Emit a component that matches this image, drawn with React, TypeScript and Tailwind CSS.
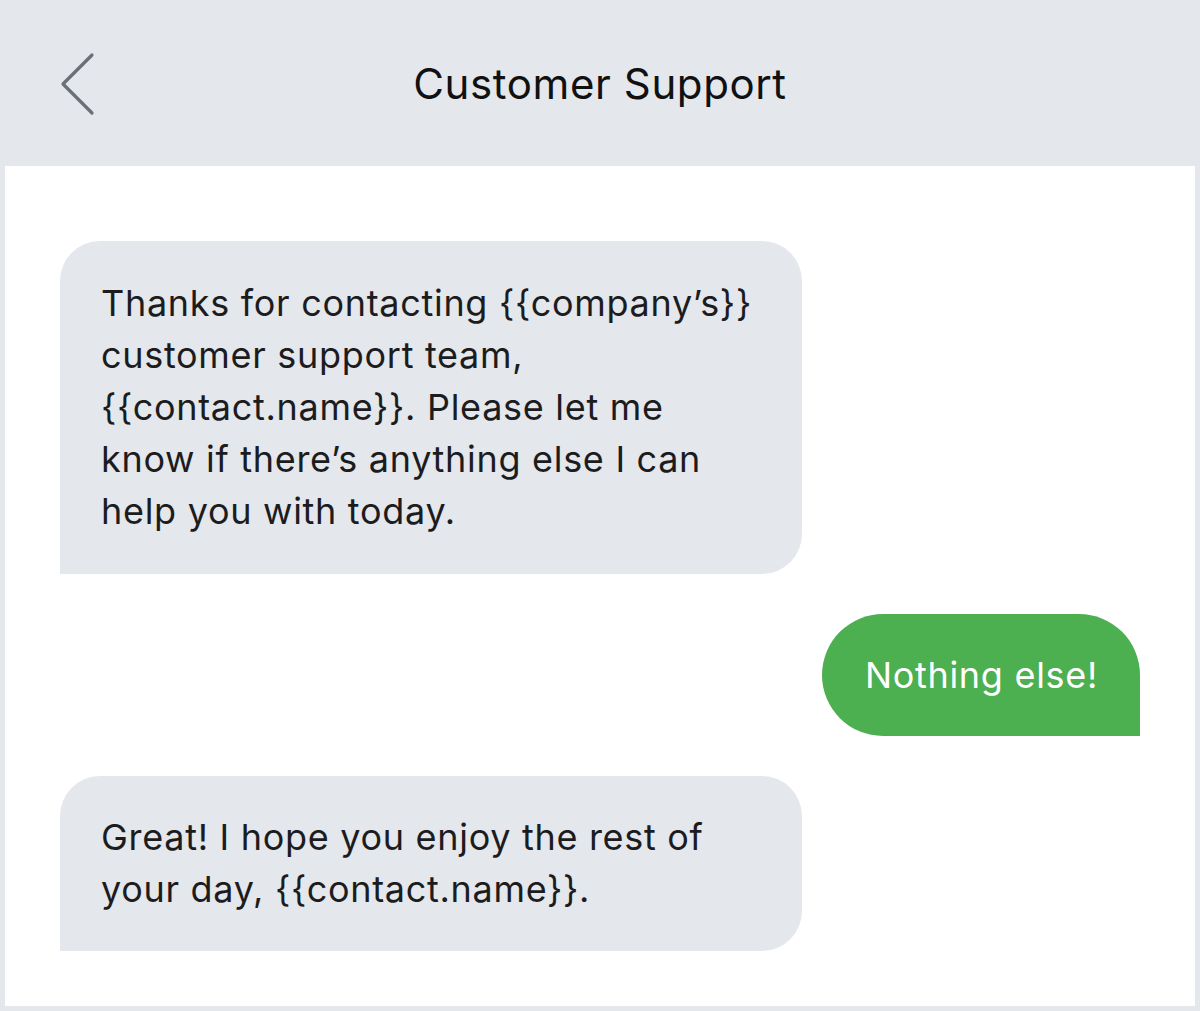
export default function App() {
  return (
    <div
      className="w-full h-[1011px] bg-[#e4e7eb] pt-px px-[5px] pb-[5px] flex flex-col"
      style={{ fontFamily: 'Inter, "Noto Sans", sans-serif' }}
    >
      <header className="h-[165px] shrink-0 grid grid-cols-[1fr_auto_1fr] items-center">
        <div className="pl-[55px]">
          <svg width="36" height="64" viewBox="0 0 36 64" fill="none">
            <path
              d="M32 3 L3 32 L32 61"
              stroke="#6b6f76"
              strokeWidth="3.2"
              strokeLinecap="round"
              strokeLinejoin="round"
            />
          </svg>
        </div>
        <h1 className="text-[42px] tracking-[0.6px] text-[#111]">Customer Support</h1>
        <div />
      </header>

      <main className="flex-1 bg-white px-[55px] pt-[75px] flex flex-col gap-[40px] text-[36px] tracking-[0.7px] leading-[52px] text-[#1c1c1e]">
        <div className="self-start w-[742px] bg-[#e4e7eb] rounded-[40px] rounded-bl-none pl-[41px] pr-[44px] pt-[36px] pb-[37px]">
          Thanks for contacting {'{{'}company’s{'}}'} customer support team, {'{{'}contact.name{'}}'}. Please let me know if there’s anything else I can help you with today.
        </div>
        <div className="self-end bg-[#4caf50] text-white rounded-[61px] rounded-br-none pl-[43px] pr-[42px] py-[35px]">
          Nothing else!
        </div>
        <div className="self-start w-[742px] bg-[#e4e7eb] rounded-[40px] rounded-bl-none pl-[41px] pr-[44px] pt-[35px] pb-[36px]">
          Great! I hope you enjoy the rest of your day, {'{{'}contact.name{'}}'}.
        </div>
      </main>
    </div>
  );
}
